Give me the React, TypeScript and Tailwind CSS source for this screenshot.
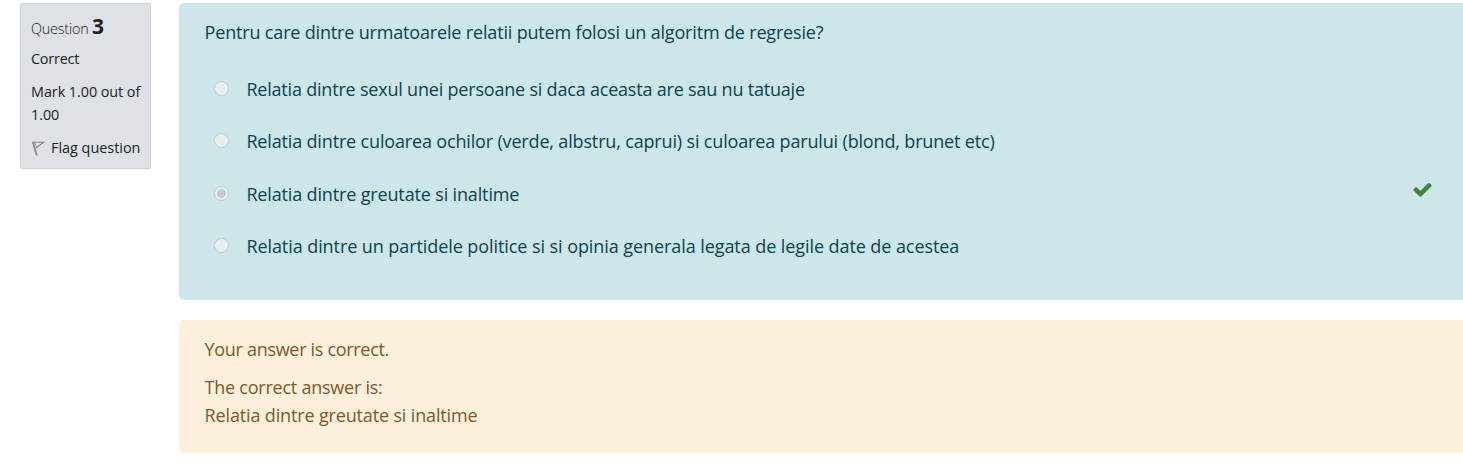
type Option = { text: string; checked?: boolean; tracking: string };

const options: Option[] = [
  { text: 'Relatia dintre sexul unei persoane si daca aceasta are sau nu tatuaje', tracking: 'tracking-[-0.2px]' },
  {
    text: 'Relatia dintre culoarea ochilor (verde, albstru, caprui) si culoarea parului (blond, brunet etc)',
    tracking: 'tracking-[-0.16px]',
  },
  { text: 'Relatia dintre greutate si inaltime', checked: true, tracking: 'tracking-[-0.15px]' },
  {
    text: 'Relatia dintre un partidele politice si si opinia generala legata de legile date de acestea',
    tracking: 'tracking-[-0.075px]',
  },
];

function Radio({ checked }: { checked?: boolean }) {
  return (
    <span
      role="radio"
      aria-checked={!!checked}
      aria-disabled
      className="mt-[6px] flex size-[15px] shrink-0 items-center justify-center rounded-full border border-[#c2cbcd] bg-[#e8eff1]"
    >
      {checked && <span className="size-[9px] rounded-full bg-[#c5cccd]" />}
    </span>
  );
}

function FlagIcon() {
  return (
    <svg viewBox="0 0 14 16" className="mt-[4px] h-4 w-[14px] shrink-0" fill="none" stroke="#85888b">
      <path d="M1.8 2 L5.8 15.4" strokeWidth="1.7" />
      <path d="M1.2 2.3 H12.6 L4.8 8" strokeWidth="1.1" />
      <path d="M3.8 2.6 L5.6 7" strokeWidth="0.9" />
    </svg>
  );
}

function CheckIcon() {
  return (
    <svg viewBox="0 0 1792 1792" className="-mt-[1px] size-[21px] shrink-0" fill="#3b883d">
      <path d="M1671 566q0 40-28 68l-724 724-136 136q-28 28-68 28t-68-28l-136-136-362-362q-28-28-28-68t28-68l136-136q28-28 68-28t68 28l294 295 656-657q28-28 68-28t68 28l136 136q28 28 28 68z" />
    </svg>
  );
}

export default function App() {
  return (
    <div className="flex h-[464px] items-start overflow-hidden bg-white pt-[3px] pl-5 font-['Open_Sans','Noto_Sans',sans-serif]">
      <aside className="h-[166px] w-[131px] shrink-0 rounded-[2px] border border-[#c9d0d8] bg-[#dee2e6] pl-[10px] text-[14.4px] leading-[23px] whitespace-nowrap text-[#1d2125]">
        <h3 className="mt-[11px] flex h-[28px] items-baseline font-light">
          <span className="tracking-[-0.2px]">Question</span>
          <span className="ml-[3.5px] text-[21px] font-bold">3</span>
        </h3>
        <div className="mt-[4px] tracking-[-0.2px]">Correct</div>
        <div className="mt-[10px] tracking-[-0.06px]">
          Mark 1.00 out of
          <br />
          1.00
        </div>
        <div className="mt-[10px] flex gap-[6px]">
          <FlagIcon />
          <span>Flag question</span>
        </div>
      </aside>

      <main className="ml-7 min-w-0 flex-1 text-[18px] leading-[28px] whitespace-nowrap">
        <section className="h-[297px] rounded-l-[5px] bg-[#cde6ea] pt-[15px] pl-[25.6px] text-[#0b4350]">
          <p className="tracking-[-0.17px]">
            Pentru care dintre urmatoarele relatii putem folosi un algoritm de regresie?
          </p>
          <div className="mt-[29px] flex flex-col gap-[24.3px]">
            {options.map((o) => (
              <div key={o.text} className="flex items-start pl-[9.8px]">
                <Radio checked={o.checked} />
                <span className={`ml-[17px] flex-1 ${o.tracking}`}>{o.text}</span>
                {o.checked && (
                  <span className="mr-[30.5px]">
                    <CheckIcon />
                  </span>
                )}
              </div>
            ))}
          </div>
        </section>

        <section className="mt-5 h-[133px] rounded-l-[5px] bg-[#fcefdc] pt-[15px] pl-[25.6px] text-[#7d5a29]">
          <p className="tracking-[-0.31px]">Your answer is correct.</p>
          <p className="mt-[10px]">
            <span className="tracking-[-0.24px]">The correct answer is:</span>
            <br />
            <span className="tracking-[-0.15px]">Relatia dintre greutate si inaltime</span>
          </p>
        </section>
      </main>
    </div>
  );
}
